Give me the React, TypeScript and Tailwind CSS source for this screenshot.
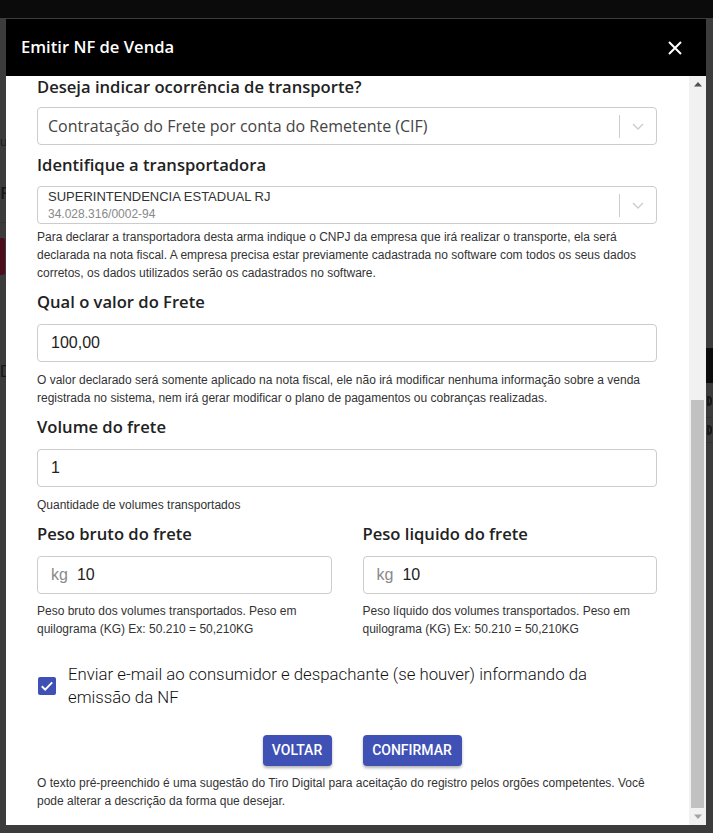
import React from "react";

const open = { fontFamily: '"Open Sans", "Noto Sans", sans-serif' };
const lib = { fontFamily: '"Liberation Sans", Arial, sans-serif' };
const rob = { fontFamily: 'Roboto, "Liberation Sans", sans-serif' };

function Chevron() {
  return (
    <svg width="12" height="7" viewBox="0 0 12 7" fill="none">
      <path d="M1 1l5 5 5-5" stroke="#cccccc" strokeWidth="1.4" />
    </svg>
  );
}

function Indicator() {
  return (
    <div className="flex items-center self-stretch">
      <div className="h-[23px] w-px bg-[#cccccc]" />
      <div className="flex w-[36px] justify-center">
        <Chevron />
      </div>
    </div>
  );
}

function Heading({ children, className = "" }: { children: React.ReactNode; className?: string }) {
  return (
    <div className={"text-[16.6px] font-semibold leading-[22px] text-[#222222] " + className} style={open}>
      {children}
    </div>
  );
}

function Help({ children, className = "" }: { children: React.ReactNode; className?: string }) {
  return (
    <div className={"text-[12px] leading-[18px] text-[#333333] " + className} style={lib}>
      {children}
    </div>
  );
}

function TextInput({ value, prefix }: { value: string; prefix?: string }) {
  return (
    <div
      className="flex h-[38px] items-center gap-[9px] rounded-[4px] border border-[#cccccc] bg-white px-[13px] text-[16px]"
      style={lib}
    >
      {prefix && <span className="text-[#8a8a8a]">{prefix}</span>}
      <span className="text-[#222222]">{value}</span>
    </div>
  );
}

export default function App() {
  return (
    <div className="relative h-[833px] w-[713px] overflow-hidden bg-[#3c3c3c]">
      {/* dimmed page behind */}
      <div className="h-[18px] bg-[#0b0b0b]" />
      <div className="absolute left-0 top-[132px] text-[13px] text-[#1e1e1e]" style={lib}>ue</div>
      <div className="absolute left-0 top-[180px] text-[17px] font-semibold text-[#161616]" style={open}>F</div>
      <div className="absolute left-0 top-[222px] h-px w-[6px] bg-[#333333]" />
      <div className="absolute left-0 top-[238px] h-[37px] w-[5px] rounded-r-[3px] bg-[#4c0d1c]" />
      <div className="absolute left-0 top-[360px] text-[16px] text-[#161616]" style={lib}>D</div>
      <div className="absolute right-0 top-[348px] h-[35px] w-[7px] bg-[#0c0c0c]" />
      <div className="absolute right-0 top-[417px] h-px w-[7px] bg-[#333333]" />
      <div className="absolute right-0 top-[442px] h-px w-[7px] bg-[#333333]" />
      <div className="absolute left-[707px] top-[396px] h-[10px] w-[5px] rounded-r-[4px] border-2 border-l-2 border-[#1a1a1a]" />
      <div className="absolute left-[707px] top-[425px] h-[10px] w-[5px] rounded-r-[4px] border-2 border-l-2 border-[#1a1a1a]" />

      {/* modal */}
      <div className="absolute left-[6px] top-[19px] flex w-[700px] flex-col">
        <div className="flex h-[57px] items-center justify-between bg-black pl-[15px] pr-[24px]">
          <div className="text-[16.6px] font-semibold text-white" style={open}>
            Emitir NF de Venda
          </div>
          <svg width="14" height="14" viewBox="0 0 14 14">
            <path d="M1 1L13 13M13 1L1 13" stroke="#ffffff" strokeWidth="2" />
          </svg>
        </div>

        <div className="flex h-[749px] bg-white">
          <div className="flex-1 overflow-hidden pl-[31px] pr-[32px]">
            <Heading>Deseja indicar ocorrência de transporte?</Heading>
            <div className="mt-[9px] flex h-[38px] items-center rounded-[4px] border border-[#cccccc] bg-white">
              <div className="flex-1 pl-[10px] text-[16px] text-[#444444]" style={open}>
                Contratação do Frete por conta do Remetente (CIF)
              </div>
              <Indicator />
            </div>

            <Heading className="mt-[9px]">Identifique a transportadora</Heading>
            <div className="mt-[10px] flex h-[38px] items-center rounded-[4px] border border-[#cccccc] bg-white">
              <div className="flex flex-1 flex-col pl-[10px]" style={lib}>
                <span className="text-[13px] leading-[18px] text-[#333333]">SUPERINTENDENCIA ESTADUAL RJ</span>
                <span className="text-[12px] leading-[16px] text-[#888888]">34.028.316/0002-94</span>
              </div>
              <Indicator />
            </div>
            <Help className="mt-[4px]">
              Para declarar a transportadora desta arma indique o CNPJ da empresa que irá realizar o transporte, ela será
              <br />
              declarada na nota fiscal. A empresa precisa estar previamente cadastrada no software com todos os seus dados
              <br />
              corretos, os dados utilizados serão os cadastrados no software.
            </Help>

            <Heading className="mt-[9px]">Qual o valor do Frete</Heading>
            <div className="mt-[11px]">
              <TextInput value="100,00" />
            </div>
            <Help className="mt-[9px]">
              O valor declarado será somente aplicado na nota fiscal, ele não irá modificar nenhuma informação sobre a venda
              <br />
              registrada no sistema, nem irá gerar modificar o plano de pagamentos ou cobranças realizadas.
            </Help>

            <Heading className="mt-[9px]">Volume do frete</Heading>
            <div className="mt-[11px]">
              <TextInput value="1" />
            </div>
            <Help className="mt-[9px]">Quantidade de volumes transportados</Help>

            <div className="mt-[9px] grid grid-cols-2 gap-x-[31px]">
              <div>
                <Heading>Peso bruto do frete</Heading>
                <div className="mt-[11px]">
                  <TextInput prefix="kg" value="10" />
                </div>
                <Help className="mt-[8px]">
                  Peso bruto dos volumes transportados. Peso em
                  <br />
                  quilograma (KG) Ex: 50.210 = 50,210KG
                </Help>
              </div>
              <div>
                <Heading>Peso liquido do frete</Heading>
                <div className="mt-[11px]">
                  <TextInput prefix="kg" value="10" />
                </div>
                <Help className="mt-[8px]">
                  Peso líquido dos volumes transportados. Peso em
                  <br />
                  quilograma (KG) Ex: 50.210 = 50,210KG
                </Help>
              </div>
            </div>

            <div className="mt-[25px] flex items-center gap-[12px] pl-[1px]">
              <div className="flex h-[18px] w-[18px] shrink-0 items-center justify-center rounded-[2px] bg-[#3f51b5]">
                <svg width="16" height="16" viewBox="0 0 16 16" fill="none">
                  <path d="M2.8 8.2l3.4 3.4 7-7.2" stroke="#ffffff" strokeWidth="2" />
                </svg>
              </div>
              <div className="text-[16.8px] font-light leading-[23px] text-[#111111]" style={rob}>
                Enviar e-mail ao consumidor e despachante (se houver) informando da
                <br />
                emissão da NF
              </div>
            </div>

            <div className="mt-[26px] flex justify-center gap-[31px] pl-[30px]">
              <button
                className="flex h-[31px] w-[69px] items-center justify-center rounded-[4px] bg-[#3f51b5] text-[14px] font-medium text-white shadow-[0_2px_3px_rgba(0,0,0,0.3)]"
                style={rob}
              >
                VOLTAR
              </button>
              <button
                className="flex h-[31px] w-[99px] items-center justify-center rounded-[4px] bg-[#3f51b5] text-[14px] font-medium text-white shadow-[0_2px_3px_rgba(0,0,0,0.3)]"
                style={rob}
              >
                CONFIRMAR
              </button>
            </div>

            <Help className="mt-[8px]">
              O texto pré-preenchido é uma sugestão do Tiro Digital para aceitação do registro pelos orgões competentes. Você
              <br />
              pode alterar a descrição da forma que desejar.
            </Help>
          </div>

          {/* scrollbar */}
          <div className="flex w-[17px] flex-col bg-[#f1f1f1]">
            <div className="flex h-[17px] items-center justify-center">
              <svg width="8" height="5" viewBox="0 0 8 5">
                <path d="M4 0L8 4.5H0z" fill="#505050" />
              </svg>
            </div>
            <div className="flex flex-1 flex-col px-[2px]">
              <div className="h-[307px]" />
              <div className="flex-1 bg-[#c1c1c1]" />
            </div>
            <div className="flex h-[17px] items-center justify-center">
              <svg width="8" height="5" viewBox="0 0 8 5">
                <path d="M0 0.5H8L4 5z" fill="#a3a3a3" />
              </svg>
            </div>
          </div>
        </div>
      </div>
    </div>
  );
}
